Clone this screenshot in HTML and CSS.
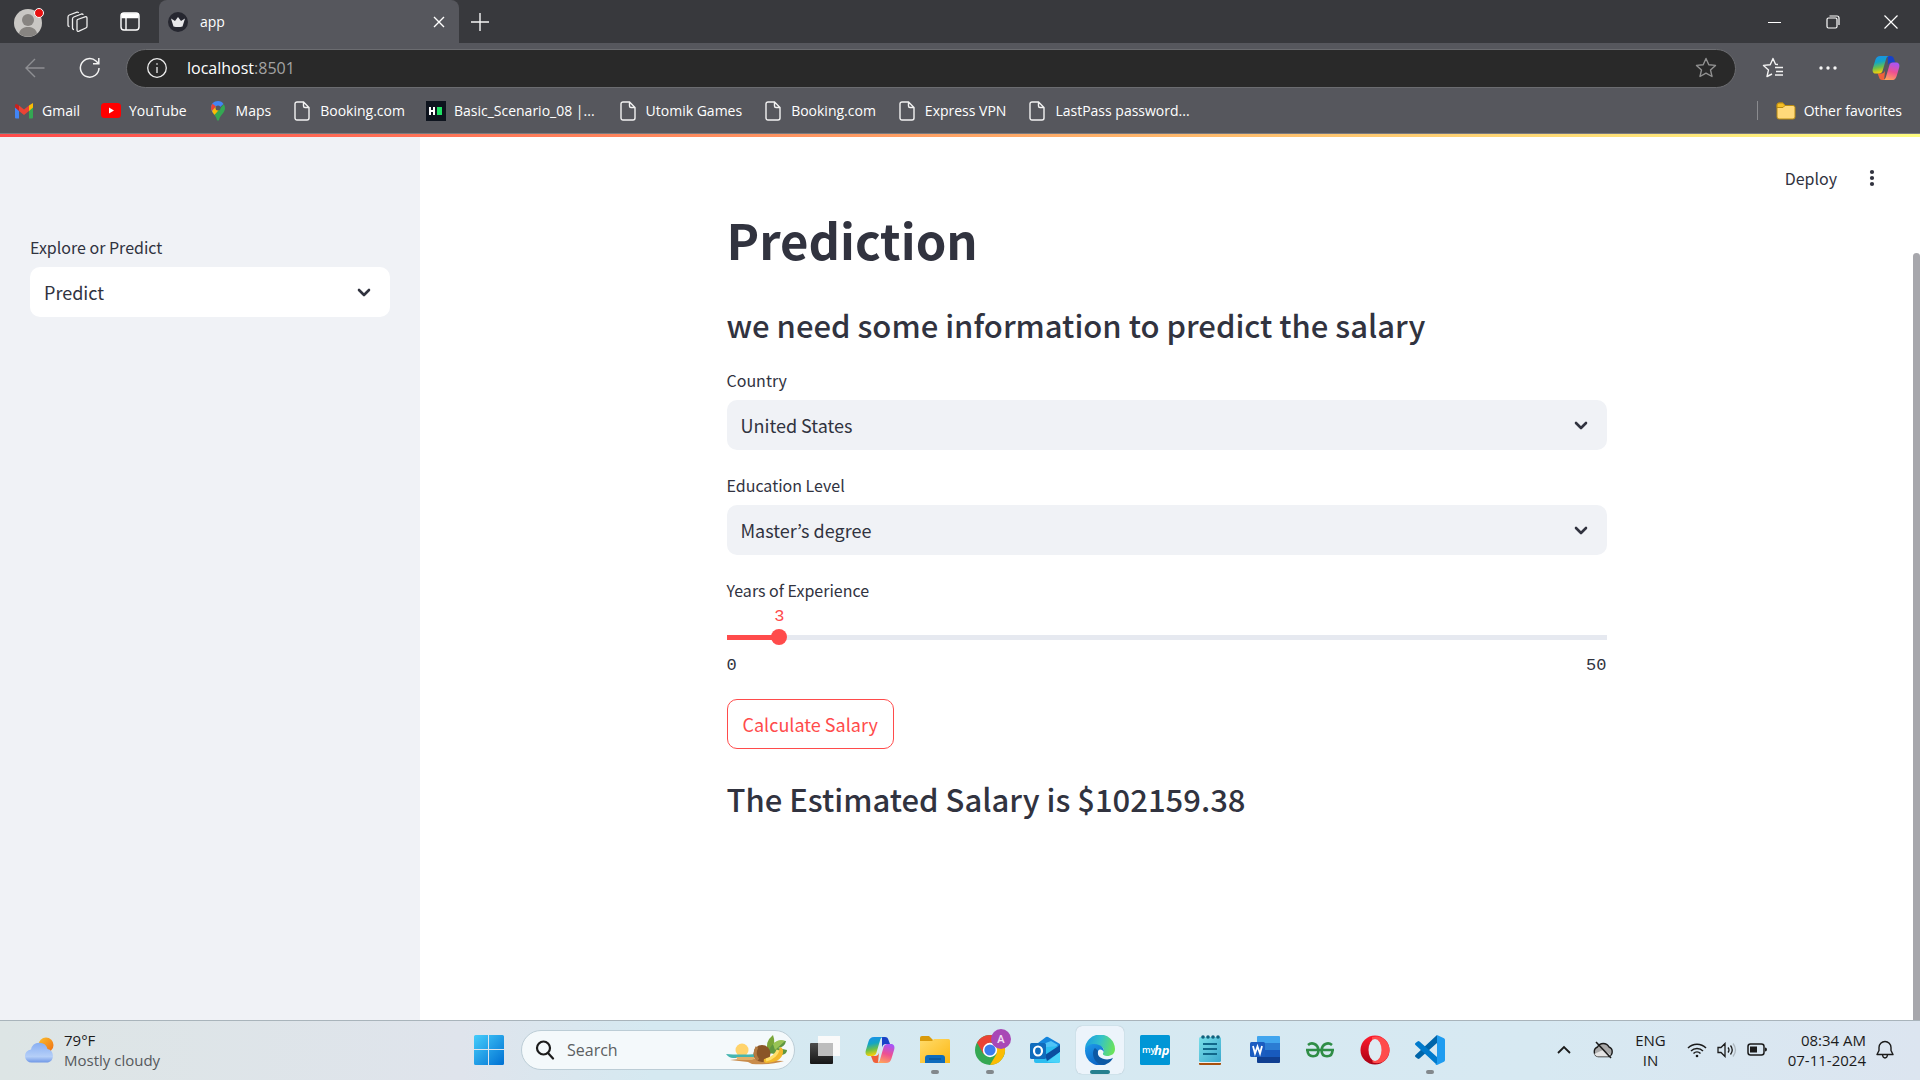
FILE: index.html
```html
<!DOCTYPE html>
<html lang="en">
<head>
<meta charset="utf-8">
<meta name="viewport" content="width=device-width, initial-scale=1">
<title>app</title>
<link rel="stylesheet" href="styles.css">
</head>
<body>
<svg class="defs" aria-hidden="true">
  <defs>
    <linearGradient id="cpA" x1="0" y1="0" x2="0.2" y2="1"><stop offset="0" stop-color="#1c8df0"/><stop offset="0.4" stop-color="#13a5c4"/><stop offset="0.7" stop-color="#6cc04a"/><stop offset="1" stop-color="#f5d00a"/></linearGradient>
    <linearGradient id="cpB" x1="0.6" y1="0" x2="0.3" y2="1"><stop offset="0" stop-color="#a855f7"/><stop offset="0.5" stop-color="#ee5091"/><stop offset="1" stop-color="#ffa45c"/></linearGradient>
    <linearGradient id="win" x1="0" y1="0" x2="1" y2="1"><stop offset="0" stop-color="#45cdfb"/><stop offset="1" stop-color="#0070d2"/></linearGradient>
    <linearGradient id="sun" x1="0" y1="0" x2="1" y2="1"><stop offset="0" stop-color="#fbc02d"/><stop offset="1" stop-color="#ef6c13"/></linearGradient>
    <linearGradient id="cloud" x1="0" y1="0" x2="0" y2="1"><stop offset="0" stop-color="#88aef2"/><stop offset="0.7" stop-color="#b5cff8"/><stop offset="1" stop-color="#6f97e6"/></linearGradient>
    <linearGradient id="folder" x1="0" y1="0" x2="1" y2="1"><stop offset="0" stop-color="#ffdb6b"/><stop offset="1" stop-color="#fdb813"/></linearGradient>
    <linearGradient id="edgeTop" x1="0" y1="0.3" x2="1" y2="0.5"><stop offset="0" stop-color="#1b9de2"/><stop offset="0.5" stop-color="#34c2c8"/><stop offset="1" stop-color="#6be35a"/></linearGradient>
    <linearGradient id="edgeMid" x1="0" y1="0" x2="0.6" y2="1"><stop offset="0" stop-color="#1e9bea"/><stop offset="1" stop-color="#0b62c4"/></linearGradient>
    <linearGradient id="pad" x1="0" y1="0" x2="1" y2="1"><stop offset="0" stop-color="#7adfe9"/><stop offset="1" stop-color="#3aa8cd"/></linearGradient>
    <linearGradient id="opera" x1="0" y1="0" x2="0" y2="1"><stop offset="0" stop-color="#ff1b2d"/><stop offset="1" stop-color="#a70014"/></linearGradient>
    <linearGradient id="dark" x1="0" y1="0" x2="0" y2="1"><stop offset="0" stop-color="#4d4d4d"/><stop offset="1" stop-color="#161616"/></linearGradient>
    <symbol id="doc" viewBox="0 0 16 20"><path d="M3 1h6.500l5.500 5.500V17a2 2 0 0 1-2 2H3a2 2 0 0 1-2-2V3a2 2 0 0 1 2-2zM9.500 1v4a1.500 1.500 0 0 0 1.500 1.500h4" fill="none" stroke="#f2f2f2" stroke-width="1.400"/></symbol>
    <symbol id="chevron" viewBox="0 0 14 9"><path d="M2 2l5 5 5-5" fill="none" stroke="#31333f" stroke-width="2.600" stroke-linecap="round" stroke-linejoin="round"/></symbol>
    <symbol id="copilot" viewBox="0 0 30 28">
      <path d="M17 1h3c2 0 3 1 3.500 3l1.500 4h-4c-2.500 0-3.500 1.500-4 3.500z" fill="#1842c8"/>
      <path d="M13 27h-2c-2 0-3-1-3.500-3L6 20h4c2.500 0 3.500-1.500 4-3.500z" fill="#f0603a"/>
      <path d="M9 1h9.500c-2 0-3 1.500-3.500 3.500l-3.500 12c-.6 2.300-2 3.500-4 3.500H4c-3 0-4-2.500-3.200-5.500l2.700-9C4.400 2.500 6 1 9 1z" fill="url(#cpA)"/>
      <path d="M21 27h-9.500c2 0 3-1.500 3.500-3.500l3.500-12c.6-2.300 2-3.500 4-3.500H26c3 0 4 2.500 3.200 5.500l-2.700 9c-.9 3-2.500 4.500-5.500 4.500z" fill="url(#cpB)"/>
    </symbol>
  </defs>
</svg>

<header class="browser">
  <div class="tabstrip">
    <div class="tab-tools">
      <button class="plain" aria-label="Profile"><svg width="32" height="32" viewBox="0 0 32 32"><circle cx="15" cy="17" r="14" fill="#c9c7c4"/><circle cx="15" cy="14" r="6" fill="#878481"/><path d="M6 27.500c1-5 5-6.500 9-6.500s8 1.500 9 6.500a14 14 0 0 1-18 0z" fill="#878481"/><circle cx="26" cy="7" r="4.500" fill="#e81010" stroke="#fff"/></svg></button>
      <button class="plain" aria-label="Workspaces"><svg width="22" height="22" viewBox="0 0 22 22" fill="none" stroke="#eee" stroke-width="1.300" stroke-linejoin="round"><path d="M11.500 8.500L19 5.800q2-.6 2 1.400v8q0 1.300-1.200 1.800L13 20.200q-2 .6-2-1.200V9.800q0-.9.500-1.300zM8 18.500q-1.500 0-1.500-1.500V8q0-1.500 1.300-2L15.500 3q1.500-.3 1.500 1M3.500 15.500Q2 15.500 2 14V6q0-1.500 1.300-2L11 1.200q1.300-.3 1.500.8"/></svg></button>
      <button class="plain" aria-label="Tab actions"><svg width="20" height="20" viewBox="0 0 20 20" fill="none" stroke="#fff" stroke-width="1.400"><rect x="1" y="1" width="18" height="17" rx="3"/><path d="M6 6v12"/><path d="M2 2h16v3.500H2z" fill="#fff"/></svg></button>
    </div>
    <div class="tab">
      <svg width="20" height="20" viewBox="0 0 20 20"><circle cx="10" cy="10" r="10" fill="#262730"/><path d="M3 6.500l4 2.500 3-4 3 4 4-2.500-2.500 8q-4.500 1-9 0z" fill="#e8e8ea"/></svg>
      <span class="tab-title">app</span>
      <button class="plain" aria-label="Close tab"><svg width="12" height="12" viewBox="0 0 12 12" stroke="#fff" stroke-width="1.400"><path d="M1 1l10 10M11 1L1 11"/></svg></button>
    </div>
    <button class="plain new-tab" aria-label="New tab"><svg width="18" height="18" viewBox="0 0 18 18" stroke="#f5f5f5" stroke-width="1.400"><path d="M9 0v18M0 9h18"/></svg></button>
    <div class="window-tools">
      <button class="plain" aria-label="Minimize"><svg width="14" height="14" viewBox="0 0 14 14"><path d="M0 7.500h13" stroke="#fff"/></svg></button>
      <button class="plain" aria-label="Restore"><svg width="14" height="14" viewBox="0 0 14 14" fill="none" stroke="#fff" stroke-width="1.200"><rect x="1" y="3" width="10" height="10" rx="1.500"/><path d="M3.500 1h7.500q2 0 2 2v7"/></svg></button>
      <button class="plain" aria-label="Close"><svg width="14" height="14" viewBox="0 0 14 14" stroke="#fff" stroke-width="1.200"><path d="M.5.5l13 13M13.500.5l-13 13"/></svg></button>
    </div>
  </div>

  <div class="toolbar">
    <button class="plain" aria-label="Back"><svg width="20" height="20" viewBox="0 0 20 20" fill="none" stroke="#8e8f93" stroke-width="1.400"><path d="M19.500 10H1M10 1L1 10l9 9"/></svg></button>
    <button class="plain" aria-label="Refresh"><svg width="22" height="22" viewBox="0 0 22 22" fill="none" stroke="#f2f2f2" stroke-width="1.500"><path d="M20 11a9.300 9.300 0 1 1-3-7l2.500 2.500M19.800 1v5.700H14"/></svg></button>
    <div class="address">
      <svg width="20" height="20" viewBox="0 0 20 20" fill="none" stroke="#eee" stroke-width="1.300"><circle cx="10" cy="10" r="9.300"/><path d="M10 9v6M10 5.200v1.500"/></svg>
      <span class="url">localhost<span class="port">:8501</span></span>
      <button class="plain" aria-label="Add to favorites"><svg width="22" height="22" viewBox="0 0 22 22" fill="none" stroke="#919191" stroke-width="1.400" stroke-linejoin="round"><path d="M11 1.500l2.800 6.200 6.700.7-5 4.500 1.500 6.600-6-3.400-6 3.400 1.500-6.600-5-4.500 6.700-.7z"/></svg></button>
    </div>
    <div class="toolbar-tools">
      <button class="plain" aria-label="Favorites"><svg width="22" height="22" viewBox="0 0 22 22" fill="none" stroke="#f2f2f2" stroke-width="1.400" stroke-linejoin="round"><path d="M16 7.500l-2.500-.2L11 1.500 8.200 7.700l-6.700.7 5 4.500L5 19.500l5-2.500M13 10.500h8M14 14.500h7M13 18h8"/></svg></button>
      <button class="plain" aria-label="Settings and more"><svg width="18" height="4" viewBox="0 0 18 4" fill="#f5f5f5"><circle cx="2" cy="2" r="1.700"/><circle cx="9" cy="2" r="1.700"/><circle cx="16" cy="2" r="1.700"/></svg></button>
      <button class="plain" aria-label="Copilot"><svg width="28" height="26"><use href="#copilot"/></svg></button>
    </div>
  </div>

  <nav class="bookmarks" aria-label="Favorites bar">
    <a href="#"><svg width="20" height="16" viewBox="0 0 20 16"><path d="M1 3v11.500q0 1 1 1h3V7z" fill="#4285f4"/><path d="M19 3v11.500q0 1-1 1h-3V7z" fill="#34a853"/><path d="M15 2.500L19 0v4.500L15 8z" fill="#fbbc04"/><path d="M5 2.500l5 4 5-4V8l-5 4-5-4z" fill="#ea4335"/><path d="M1 3q0-3 3-1.300l1 .8V8L1 4.500z" fill="#c5221f"/></svg>Gmail</a>
    <a href="#"><svg width="20" height="15" viewBox="0 0 20 15"><rect width="20" height="15" rx="3.500" fill="#f00"/><path d="M8 4.500l5 3-5 3z" fill="#fff"/></svg>YouTube</a>
    <a href="#"><svg width="20" height="20" viewBox="0 0 16 20"><path d="M8 0C3.500 0 1 3.200 1 7c0 2 1 3.800 2.200 5.300L13.500 3C12.500 1.200 10.500 0 8 0z" fill="#4285f4"/><path d="M2.500 2.800L6 5.500 2 10Q1 8.500 1 7q0-2.500 1.500-4.200z" fill="#ea4335"/><path d="M2 10l4-4.500L10 9l-5.500 5Q3 12.300 2 10z" fill="#fbbc04"/><path d="M13.700 3.200Q15 5 15 7c0 5-5 7-6 12q-1 1.500-2 0c-.5-2-1.300-3.500-2.500-5z" fill="#34a853"/><circle cx="8" cy="7" r="2.500" fill="#56575d"/></svg>Maps</a>
    <a href="#"><svg width="20" height="20"><use href="#doc"/></svg>Booking.com</a>
    <a href="#" class="wide"><svg width="20" height="20" viewBox="0 0 20 20"><path d="M0 0h20v20H0z" fill="#0e141e"/><path d="M4 6v8M8 6v8M4 10h4" stroke="#fff" stroke-width="2"/><path d="M11 6h5v8h-5z" fill="#1ee164"/></svg>Basic_Scenario_08 |...</a>
    <a href="#"><svg width="20" height="20"><use href="#doc"/></svg>Utomik Games</a>
    <a href="#"><svg width="20" height="20"><use href="#doc"/></svg>Booking.com</a>
    <a href="#"><svg width="20" height="20"><use href="#doc"/></svg>Express VPN</a>
    <a href="#"><svg width="20" height="20"><use href="#doc"/></svg>LastPass password...</a>
    <a href="#" class="other"><svg width="20" height="18" viewBox="0 0 20 18" stroke="#b98a10"><path d="M1 3q0-2 2-2h4l2 2.500H17q2 0 2 2V15q0 2-2 2H3q-2 0-2-2z" fill="#ffd97a"/><path d="M1 3q0-2 2-2h4l2 2.500L7 5.500H1z" fill="#f6bf26"/></svg>Other favorites</a>
  </nav>
</header>

<div class="app">
  <aside class="sidebar">
    <div class="field">
      <label for="page">Explore or Predict</label>
      <div class="select"><select id="page"><option>Predict</option><option>Explore</option></select><svg width="14" height="9"><use href="#chevron"/></svg></div>
    </div>
  </aside>
  <main class="main">
    <div class="app-menu">
      <button class="plain deploy">Deploy</button>
      <button class="plain" aria-label="Main menu"><svg width="6" height="18" viewBox="0 0 6 18" fill="#31333f"><circle cx="3" cy="3" r="2.100"/><circle cx="3" cy="9" r="2.100"/><circle cx="3" cy="15" r="2.100"/></svg></button>
    </div>
    <div class="content">
      <h1>Prediction</h1>
      <h3>we need some information to predict the salary</h3>
      <div class="field">
        <label for="country">Country</label>
        <div class="select"><select id="country"><option>United States</option></select><svg width="14" height="9"><use href="#chevron"/></svg></div>
      </div>
      <div class="field">
        <label for="education">Education Level</label>
        <div class="select"><select id="education"><option>Master’s degree</option></select><svg width="14" height="9"><use href="#chevron"/></svg></div>
      </div>
      <div class="slider">
        <label for="experience">Years of Experience</label>
        <div class="rail" style="--value: 6%">
          <output for="experience">3</output>
          <input id="experience" type="range" min="0" max="50" value="3">
        </div>
        <div class="bounds"><span>0</span><span>50</span></div>
      </div>
      <button class="calculate">Calculate Salary</button>
      <h3>The Estimated Salary is $102159.38</h3>
    </div>
    <div class="scrollbar"></div>
  </main>
</div>

<footer class="taskbar">
  <div class="weather">
    <svg width="30" height="26" viewBox="0 0 30 26"><circle cx="21" cy="8" r="7.500" fill="url(#sun)"/><path d="M7 25.500a6.500 6.500 0 0 1-1-13 8.500 8.500 0 0 1 16.500-.5A7 7 0 0 1 23 25.500z" fill="url(#cloud)"/></svg>
    <div><div>79°F</div><div class="muted">Mostly cloudy</div></div>
  </div>
  <div class="dock">
    <button class="plain start" aria-label="Start"><svg width="30" height="30" viewBox="0 0 30 30" fill="url(#win)"><path d="M1.500 0H14v14H0V1.500Q0 0 1.500 0zM15 0h13.500Q30 0 30 1.500V14H15zM0 15h14v15H1.500Q0 30 0 28.500zM15 15h15v13.500q0 1.500-1.500 1.500H15z"/></svg></button>
    <label class="search">
      <svg width="20" height="20" viewBox="0 0 20 20" fill="none" stroke="#1c1c1c" stroke-width="2.200"><circle cx="8.500" cy="8" r="6.500"/><path d="M13 13l5 5.500" stroke-linecap="round"/></svg>
      <input type="text" placeholder="Search" aria-label="Search">
      <svg width="62" height="30" viewBox="0 0 62 30"><circle cx="16" cy="15" r="6.500" fill="#ffd36b"/><path d="M0 19q14 1 31 0v4H7q-4 0-7-4z" fill="#45b5b0"/><path d="M4 25q18-3 42 0 6 1 12 1-12 4-32 3l-4-2z" fill="#c98c4b"/><path d="M10 22h22l-6 3H12z" fill="#e2b069"/><path d="M42 18Q38 7 47 0q3 8-1 17z" fill="#7aa63a"/><path d="M42 18Q46 4 60 6q-1 6-8 7l9 2q0 4-5 5z" fill="#5f9640"/><path d="M47 9q6-6 12-3l-10 9z" fill="#98c355"/><ellipse cx="36" cy="18.500" rx="8.500" ry="8.500" fill="#8a5527"/><path d="M31 12q-4 7 1 13" stroke="#b37b41" stroke-width="3" fill="none"/><path d="M54 12q2 0 3 3 1 12-17 13-3-1-2-4 14-1 16-12z" fill="#f3b92c"/><path d="M52 15q-2 7-12 10" stroke="#ffdf6b" stroke-width="3" fill="none"/></svg>
    </label>
    <div class="apps">
      <button class="plain" aria-label="Task view"><svg width="30" height="30" viewBox="0 0 30 30"><rect y="8" width="23" height="21" rx="1" fill="url(#dark)"/><path d="M8 1h22v20H8z" fill="#fafafa"/><path d="M8 8h15v13H8z" fill="#bdbdbd"/></svg></button>
      <button class="plain" aria-label="Copilot"><svg width="30" height="28"><use href="#copilot"/></svg></button>
      <button class="plain open" aria-label="File Explorer"><svg width="30" height="28" viewBox="0 0 30 28"><path d="M0 2q0-2 2-2h7l4 4v6H0z" fill="#d99a0b"/><path d="M0 5h12l2-2h14.500Q30 3 30 4.500V27H0z" fill="url(#folder)"/><path d="M5 27v-5q0-3 3-3h14q3 0 3 3v5z" fill="#0f6cbd"/><path d="M9 23h12" stroke="#0a4a86"/></svg></button>
      <button class="plain open chrome" aria-label="Chrome"><svg width="36" height="36" viewBox="0 0 36 36"><circle cx="15" cy="21" r="15" fill="#34a853"/><path d="M2 13.500a15 15 0 0 1 26 0H15L8.500 25z" fill="#ea4335"/><path d="M28 13.500A15 15 0 0 1 15 36l6.500-11V13.500z" fill="#fbbc04"/><circle cx="15" cy="21" r="7.200" fill="#fff"/><circle cx="15" cy="21" r="5.600" fill="#3b7ded"/><circle cx="26" cy="10" r="10" fill="#a848b6"/><text x="26" y="14" text-anchor="middle" class="badge-letter">A</text></svg></button>
      <button class="plain" aria-label="Outlook"><svg width="30" height="28" viewBox="0 0 30 28"><path d="M4 10L16 1q1-.7 2 0l12 7v5H4z" fill="#1485dc"/><path d="M13 8l8-3 7 4-12 9z" fill="#4fc3f7"/><path d="M4 12l26-2v15q0 2-2 2H6q-2 0-2-2z" fill="#2bbdf0"/><path d="M15 19l15-10v7L17 25z" fill="#0b4fa0"/><path d="M17 26l13-10v9q0 2-2 2z" fill="#4ad4fa"/><rect y="7" width="16" height="16" rx="1.500" fill="#0f6cbd"/><ellipse cx="8" cy="15" rx="4" ry="4.500" fill="none" stroke="#fff" stroke-width="2.200"/></svg></button>
      <button class="plain active" aria-label="Edge"><svg width="30" height="30" viewBox="0 0 30 30"><path d="M0 15A15 15 0 0 1 30 14c0 5-4 7-8 7-4 0-5-2-3.500-4 1-2 0-5-4-6C8 9 2 11 0 15z" fill="url(#edgeTop)"/><path d="M0 15C2 9 9 8 14 10c4 1.500 5.500 4.500 4.500 7-1-2-3-3-5-1-3 4 0 12 8 13A15 15 0 0 1 0 15z" fill="url(#edgeMid)"/><path d="M10 13c-4 4-2 14 6 16.800 6 .5 10-3 12-7-3 2-7 2-10 1-4-1.500-6-4-5-8z" fill="#0c59a4"/><path d="M13 16c1-2 4-2.500 5.500 1-1.500 2-.5 4 3.500 4-5 2-9-1-9-5z" fill="#eef6fb"/></svg></button>
      <button class="plain" aria-label="myHP"><svg width="30" height="30" viewBox="0 0 30 30"><rect width="30" height="30" rx="1.500" fill="#0096d6"/><text x="2" y="18" class="my-text">my</text><text x="14" y="20" class="hp-text">hp</text></svg></button>
      <button class="plain" aria-label="Notepad"><svg width="22" height="30" viewBox="0 0 22 30"><path d="M0 26h22v3q0 1-1 1H1q-1 0-1-1z" fill="#a8500c"/><path d="M0 26h22v2H0z" fill="#eee"/><rect y="2" width="22" height="25" rx="1.500" fill="url(#pad)"/><path d="M4 9h14M4 14h14M4 19h14" stroke="#11688a" stroke-width="2"/><g fill="#11607c"><circle cx="4" cy="2" r="1.800"/><circle cx="9" cy="2" r="1.800"/><circle cx="14" cy="2" r="1.800"/><circle cx="19" cy="2" r="1.800"/></g></svg></button>
      <button class="plain" aria-label="Word"><svg width="30" height="28" viewBox="0 0 30 28"><path d="M7 1q0-1 1-1h21q1 0 1 1v6H7z" fill="#41a5ee"/><path d="M7 7h23v7H7z" fill="#2b7cd3"/><path d="M7 14h23v7H7z" fill="#185abd"/><path d="M7 21h23v5q0 1-1 1H8q-1 0-1-1z" fill="#103f91"/><rect y="6" width="15" height="15" rx="1.500" fill="#1b5cc0"/><path d="M3 10l2 7.500 2.500-7 2.500 7 2-7.500" stroke="#fff" stroke-width="1.800" fill="none"/></svg></button>
      <button class="plain" aria-label="GeeksforGeeks"><svg width="28" height="16" viewBox="0 0 28 16" fill="none" stroke="#2f8d46" stroke-width="2.600"><path d="M0 8h28M2 3q3-2.500 6.500-1T12.500 8q0 6.300-5.500 6.300T1.500 8M26 3q-3-2.500-6.500-1T15.500 8q0 6.300 5.500 6.300T26.500 8"/></svg></button>
      <button class="plain" aria-label="Opera"><svg width="30" height="30" viewBox="0 0 30 30"><ellipse cx="15" cy="15" rx="14.500" ry="14.500" fill="url(#opera)"/><path d="M12 2q8-2 13 3 5 5 4.500 11-1 7-6 10.500-5 3-11 1z" fill="#ff4b4b"/><ellipse cx="15" cy="15" rx="6.500" ry="11" fill="#dfecf3"/></svg></button>
      <button class="plain open" aria-label="Visual Studio Code"><svg width="30" height="30" viewBox="0 0 30 30"><path d="M22 0v8L4.500 23.500q-1 .8-2 0L.5 22q-1-1 0-2z" fill="#0065a9"/><path d="M22 30v-8L4.500 6.500q-1-.8-2 0L.5 8q-1 1 0 2z" fill="#007acc"/><path d="M22 0l7 3.300q1 .5 1 1.700v20q0 1.200-1 1.700L22 30q-1 .3-1.500-.5L22 28z" fill="#1f9cf0"/></svg></button>
    </div>
  </div>
  <div class="tray">
    <svg width="14" height="9" viewBox="0 0 14 9" fill="none" stroke="#1b1b1b" stroke-width="1.800"><path d="M1 8l6-6 6 6"/></svg>
    <svg width="22" height="18" viewBox="0 0 22 18"><path d="M6 15.500a5 5 0 0 1-.5-9.500A6.500 6.500 0 0 1 17 6a5 5 0 0 1-.5 9.500z" fill="#a9a9a9" stroke="#1b1b1b" stroke-width="1.400"/><path d="M2 13l9-4 8 5-3 1.500H5z" fill="#e4e4e4"/><path d="M4 1l15 16" stroke="#1b1b1b" stroke-width="1.600"/></svg>
    <div class="lang"><div>ENG</div><div>IN</div></div>
    <div class="status">
      <svg width="20" height="16" viewBox="0 0 20 16" fill="none" stroke="#1b1b1b" stroke-width="1.500"><path d="M1 6a12.500 12.500 0 0 1 18 0M4 9a8.500 8.500 0 0 1 12 0M6.500 11.500a5 5 0 0 1 7 0"/><circle cx="10" cy="14" r="1.300" fill="#1b1b1b" stroke="none"/></svg>
      <svg width="20" height="16" viewBox="0 0 20 16" fill="none" stroke="#1b1b1b" stroke-width="1.300"><path d="M1 5.500h3l4-4v13l-4-4H1zM11 5.500q2 2.500 0 5M13.500 3.500q3.500 4.500 0 9"/><path d="M16 1.500q5 6.500 0 13" stroke="#aeb8bf"/></svg>
      <svg width="20" height="14" viewBox="0 0 20 14"><rect x="1" y="1" width="16" height="11" rx="2.500" fill="none" stroke="#1b1b1b" stroke-width="1.500"/><path d="M3 3.500h7v6H3z" fill="#1b1b1b"/><path d="M18 4.500q2 0 2 2t-2 2z" fill="#1b1b1b"/></svg>
    </div>
    <div class="clock"><div>08:34 AM</div><div>07-11-2024</div></div>
    <svg width="18" height="20" viewBox="0 0 18 20" fill="none" stroke="#1b1b1b" stroke-width="1.400"><path d="M1 14.500l2-4V7.500a6 6 0 0 1 12 0v3l2 4zM6.500 15q.5 3 2.500 3t2.500-3" stroke-linejoin="round"/></svg>
  </div>
</footer>
</body>
</html>
```
FILE: styles.css
```css
* { box-sizing: border-box; }

body {
  margin: 0;
  min-height: 100vh;
  display: flex;
  flex-direction: column;
  background: #fff;
  color: #31333f;
  font-family: "Noto Sans CJK JP", sans-serif;
  font-size: 18px;
}

svg { display: block; flex: none; }
.defs { position: absolute; width: 0; height: 0; }

.plain {
  display: flex;
  align-items: center;
  justify-content: center;
  padding: 0;
  border: 0;
  background: none;
  color: inherit;
  font: inherit;
}

/* Browser window */
.browser {
  background: #56575d;
  color: #fff;
  font-family: "Open Sans", sans-serif;
  font-size: 14px;
  border-bottom: 1px solid #7b7c80;
}

.tabstrip {
  display: flex;
  align-items: center;
  height: 43px;
  background: #38393d;
}
.tab-tools {
  display: flex;
  align-items: center;
  gap: 21px;
  width: 159px;
  padding-left: 13px;
}
.tab-tools .plain:last-child { margin-left: 11px; }
.tab {
  display: flex;
  align-items: center;
  align-self: stretch;
  gap: 12px;
  width: 300px;
  padding: 0 14px 0 9px;
  background: #56575d;
  border-radius: 8px 8px 0 0;
}
.tab-title { flex: 1; }
.new-tab { margin-left: 12px; }
.window-tools {
  display: flex;
  gap: 44px;
  margin-left: auto;
  padding-right: 22px;
}

.toolbar {
  display: flex;
  align-items: center;
  height: 51px;
  padding: 0 20px 1px 25px;
}
.toolbar > .plain { margin-right: 34px; }
.toolbar > .plain + .plain { margin-right: 25px; }
.address {
  display: flex;
  flex: 1;
  align-items: center;
  gap: 20px;
  height: 39px;
  padding: 0 18px 0 20px;
  border: 1px solid #6b6c70;
  border-radius: 20px;
  background: #292929;
}
.url { flex: 1; font-size: 16px; }
.port { color: #a3a3a3; }
.toolbar-tools {
  display: flex;
  align-items: center;
  gap: 35px;
  padding-left: 26px;
}

.bookmarks {
  display: flex;
  align-items: center;
  gap: 21px;
  height: 39px;
  padding: 0 18px 6px 14px;
}
.bookmarks a {
  display: flex;
  align-items: center;
  gap: 8px;
  color: #fff;
  text-decoration: none;
  white-space: nowrap;
}
.bookmarks .wide { margin-right: 2px; }
.bookmarks .other {
  margin-left: auto;
  padding-left: 18px;
  border-left: 1px solid #8a8b8f;
}

/* App */
.app {
  display: flex;
  flex: 1;
  border-top: 3px solid;
  border-image: linear-gradient(90deg, #ff4b4b, #fffd80) 1;
}
.sidebar {
  width: 420px;
  padding: 100px 30px 30px;
  background: #f0f2f6;
}
.main {
  position: relative;
  flex: 1;
  padding: 21px 45px 30px 38px;
}
.app-menu {
  display: flex;
  align-items: center;
  justify-content: flex-end;
  gap: 32px;
  height: 40px;
  font-size: 16px;
}
.app-menu .plain:last-child { width: 6px; }
.content {
  display: flex;
  flex-direction: column;
  gap: 20px;
  max-width: 880px;
  margin: 0 auto;
}
.scrollbar {
  position: absolute;
  top: 116px;
  right: 0;
  bottom: 0;
  width: 7px;
  border-radius: 4px 4px 0 0;
  background: #a7a7ac;
}

h1, h3 { margin: 0; }
h1 {
  margin: 8px 0;
  font-size: 49px;
  line-height: 66px;
  font-weight: 700;
}
h3 {
  font-size: 31px;
  line-height: 50px;
  font-weight: 500;
}

.field label, .slider label {
  display: block;
  height: 30px;
  font-size: 16px;
  line-height: 20px;
}
.field { margin-bottom: 5px; }
.select {
  display: flex;
  align-items: center;
  height: 50px;
  padding-right: 19px;
  border-radius: 10px;
  background: #f0f2f6;
}
.select select {
  flex: 1;
  height: 50px;
  padding: 0 14px;
  border: 0;
  appearance: none;
  background: none;
  color: inherit;
  font: inherit;
}
.sidebar .select { background: #fff; }

.slider label { height: 27px; }
.rail {
  position: relative;
  height: 49px;
  padding-top: 22px;
}
.rail output {
  position: absolute;
  top: 0;
  left: var(--value);
  transform: translateX(-50%);
  color: #ff4b4b;
  font-family: "Liberation Mono", monospace;
  font-size: 17px;
  line-height: 20px;
}
.rail input {
  display: block;
  appearance: none;
  width: calc(100% + 16px);
  height: 16px;
  margin: 0 -8px;
  background: linear-gradient(90deg, #ff4b4b var(--value), #e6e9f0 0) content-box;
  padding: 6px 8px 5px;
}
.rail input::-webkit-slider-runnable-track {
  height: 16px;
  margin: -6px -8px -5px;
}
.rail input::-webkit-slider-thumb {
  appearance: none;
  width: 16px;
  height: 16px;
  border-radius: 50%;
  background: #ff4b4b;
}
.bounds {
  display: flex;
  justify-content: space-between;
  height: 23px;
  font-family: "Liberation Mono", monospace;
  font-size: 17px;
  line-height: 20px;
}

.calculate {
  align-self: flex-start;
  height: 50px;
  margin-bottom: 5px;
  padding: 0 15px;
  border: 1px solid #ff4b4b;
  border-radius: 10px;
  background: #fff;
  color: #ff4b4b;
  font: inherit;
}

/* Taskbar */
.taskbar {
  display: grid;
  grid-template-columns: 1fr auto 1fr;
  align-items: center;
  height: 60px;
  padding: 0 26px 2px 25px;
  border-top: 1px solid #a9b4bb;
  background: linear-gradient(90deg, #dde5e5, #dfe4ec 24%, #d5e9f1 34%, #d7e9f2 80%, #dce5f0);
  color: #1b1b1b;
  font-family: "Open Sans", sans-serif;
  font-size: 15px;
  line-height: 20px;
}
.weather { display: flex; align-items: center; gap: 9px; }
.muted { color: #56595c; }
.dock { display: flex; align-items: center; padding-left: 9px; }
.start { margin-right: 17px; }
.search {
  display: flex;
  align-items: center;
  gap: 12px;
  width: 274px;
  height: 40px;
  padding: 0 6px 0 13px;
  border: 1px solid #bccdd6;
  border-radius: 20px;
  background: #f4f9fb;
}
.search input {
  flex: 1;
  min-width: 0;
  padding: 0;
  border: 0;
  background: none;
  font: inherit;
  font-size: 16px;
}
.search input::placeholder { color: #5c5f62; }
.apps { display: flex; gap: 7px; padding-left: 6px; }
.apps .plain {
  position: relative;
  width: 48px;
  height: 48px;
  border-radius: 6px;
}
.apps .chrome { padding: 0 0 6px 6px; }
.apps .active { background: #ecf4fb; box-shadow: 0 0 1px #8fa5b1; }
.apps .open::after, .apps .active::after {
  content: "";
  position: absolute;
  bottom: 0;
  left: 20px;
  width: 8px;
  height: 4px;
  border-radius: 2px;
  background: #82888c;
}
.apps .active::after { left: 14px; width: 20px; background: #25808f; }
.badge-letter { fill: #f3e2f5; font-size: 11px; font-weight: 600; }
.my-text { fill: #fff; font-size: 9px; font-weight: 600; }
.hp-text { fill: #fff; font-size: 13px; font-weight: 700; font-style: italic; }
.tray {
  display: flex;
  align-items: center;
  justify-content: flex-end;
  gap: 21px;
}
.lang { text-align: center; }
.status { display: flex; align-items: center; gap: 10px; }
.clock { text-align: right; }
.clock + svg { margin-left: -11px; }
```
